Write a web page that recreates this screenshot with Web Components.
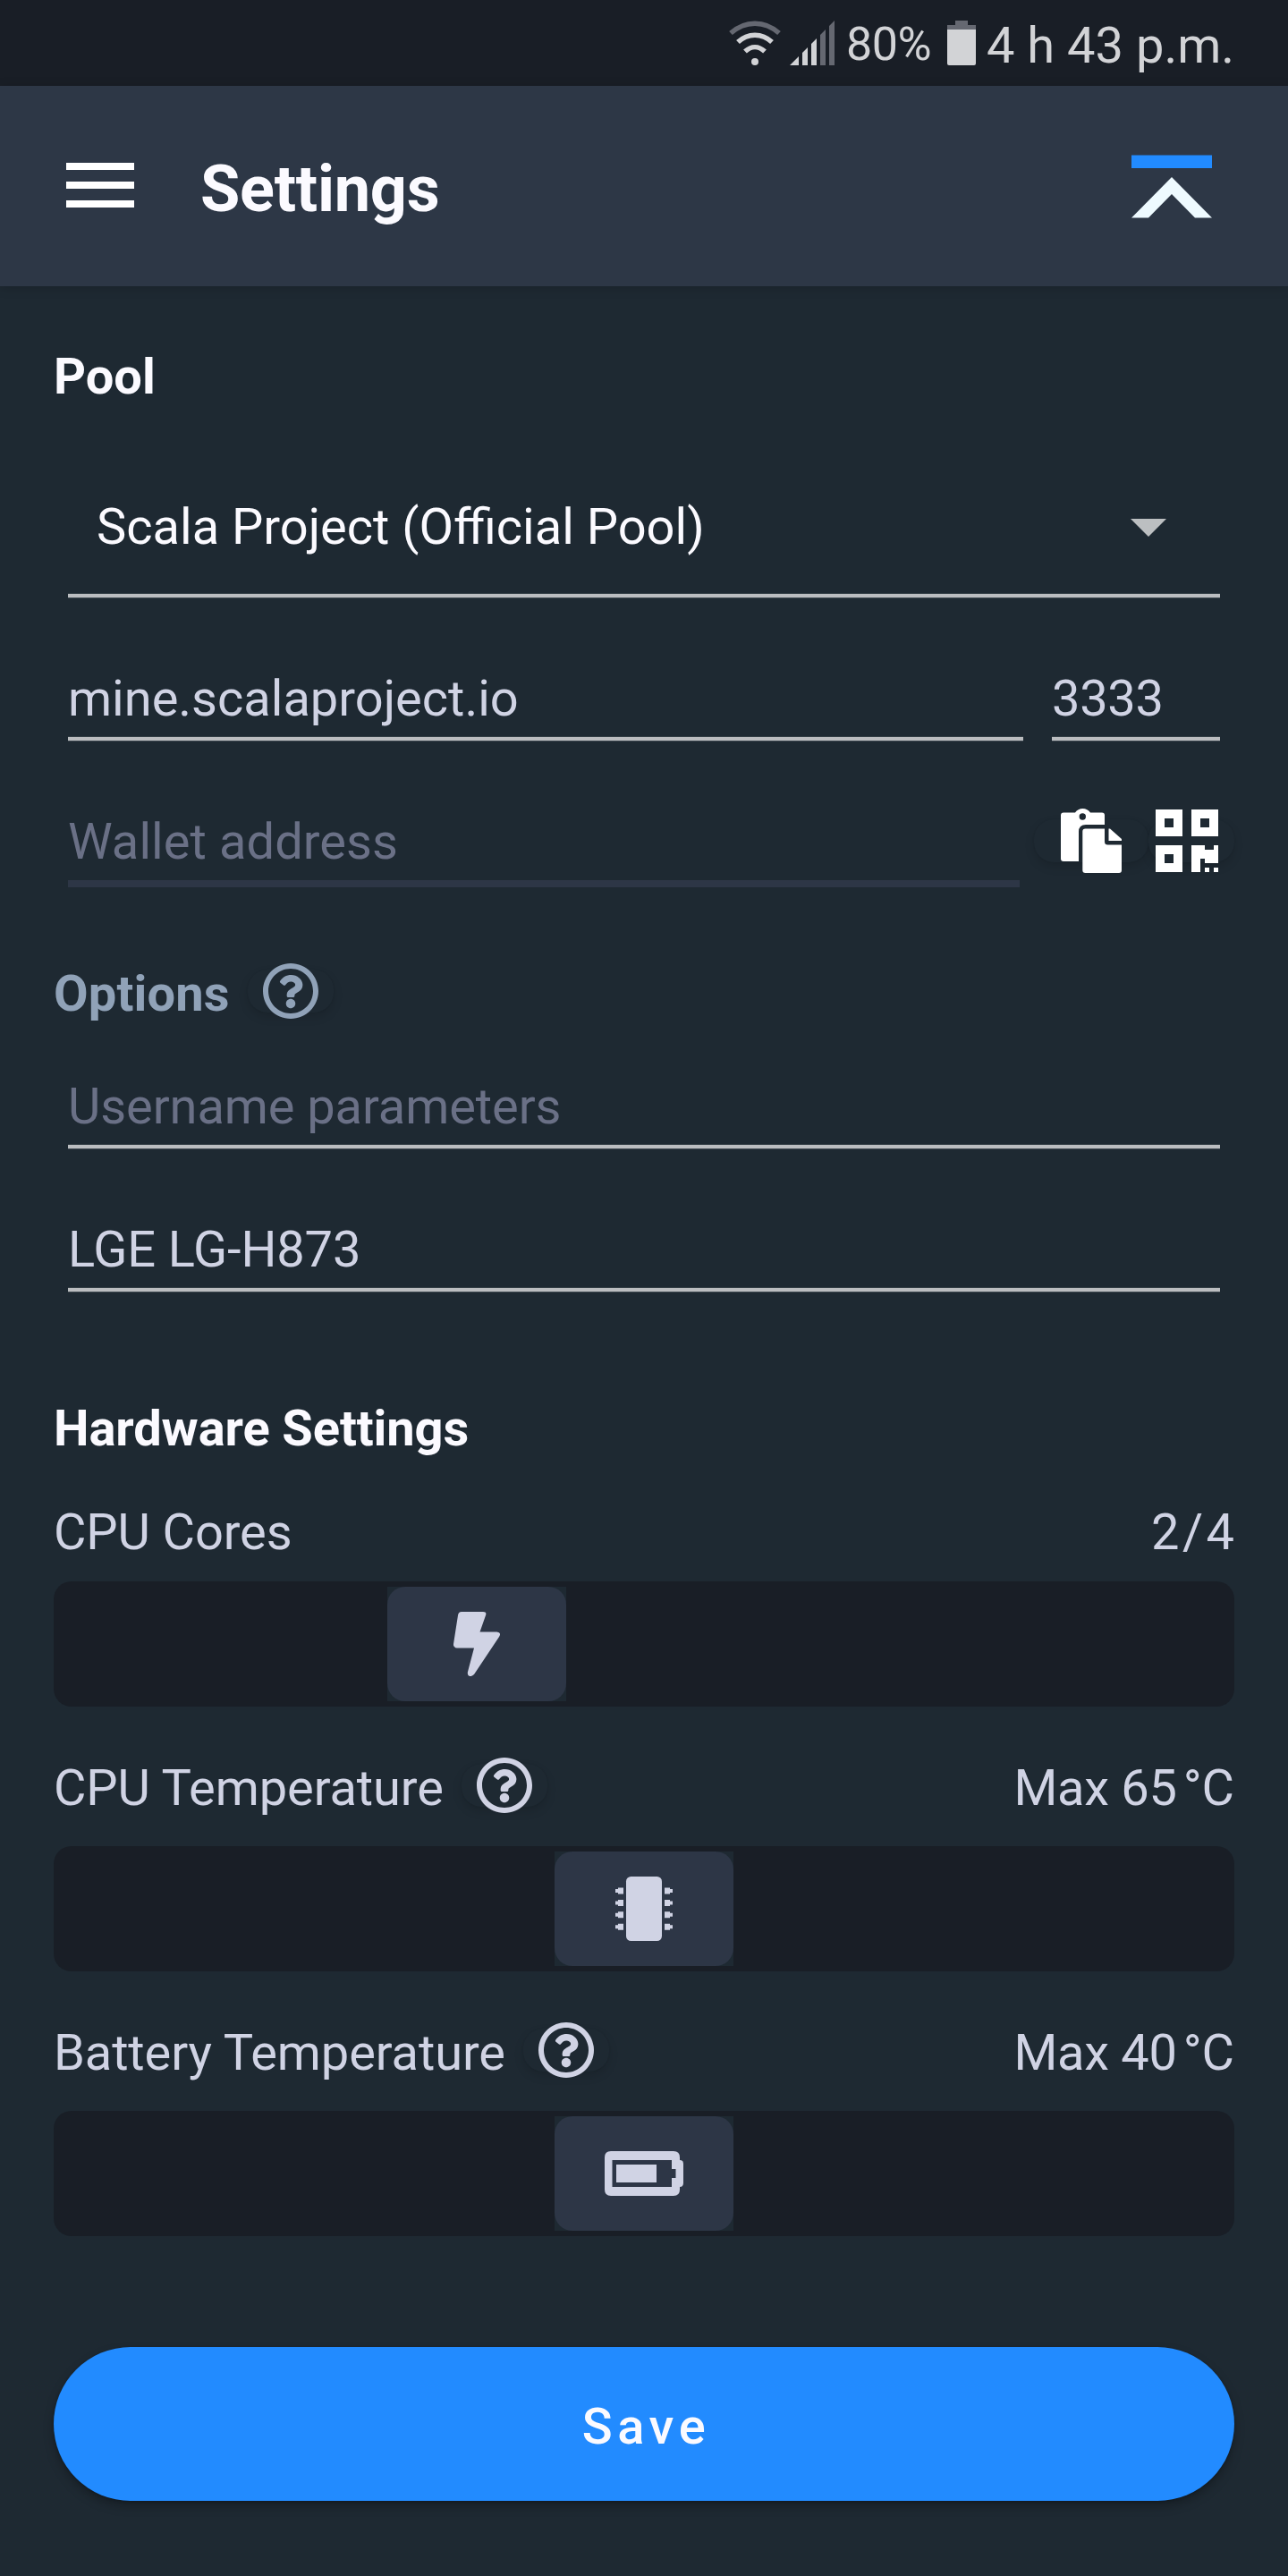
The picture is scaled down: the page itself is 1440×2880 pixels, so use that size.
<!DOCTYPE html>
<html lang="en">
<head>
<meta charset="utf-8">
<title>Settings</title>
<style>
  html, body { margin: 0; padding: 0; background: #1e2932; }
  body { width: 1440px; height: 2880px; overflow: hidden; font-family: Roboto, "Liberation Sans", sans-serif; }
</style>
</head>
<body>
<settings-screen></settings-screen>
<script>
const define = (name, html) => {
  const tpl = document.createElement('template');
  tpl.innerHTML = html;
  customElements.define(name, class extends HTMLElement {
    constructor() {
      super();
      this.attachShadow({ mode: 'open' }).append(tpl.content.cloneNode(true));
    }
  });
};

define('status-bar', `
<style>
  :host { display: flex; height: 96px; background: #191e26; color: #d2d3d6; box-sizing: border-box; padding: 0 62px 0 815px; }
  svg { display: block; flex: none; }
  span { white-space: pre; line-height: 64px; flex: none; }
  .pct { font-size: 52px; margin: 18px 0 0 11px; letter-spacing: -.5px; width: 96px; }
  .time { font-size: 56px; margin: 19px 0 0 12px; }
  .bat { margin-left: 17px; }
</style>
<svg width="120" height="96" viewBox="815 0 120 96">
  <path d="M817 37C833 22.500 855 22.500 871 37" fill="none" stroke="#656871" stroke-width="5.500"/>
  <path d="M825 47C836 36.500 852 36.500 863 47M833 57.500C840 51 848 51 855 57.500" fill="none" stroke="#d2d3d6" stroke-width="5.500"/>
  <g fill="#d2d3d6"><circle cx="844" cy="69" r="4"/><path d="M883 73l10-10v10zM897 73V59l6-6v20zM907 73V49l6-6v30z"/></g>
  <path fill="#656871" d="M917 73V39l6-6v40zM927 73V29l6-6v50z"/>
</svg>
<span class="pct">80%</span>
<svg class="bat" width="32" height="96" viewBox="1059 0 32 96">
  <path fill="#656871" d="M1068 23h14v5h9v6h-32v-6h9z"/>
  <path fill="#d2d3d6" d="M1059 33h32v38q0 2-2 2h-28q-2 0-2-2z"/>
</svg>
<span class="time">4 h 43 p.m.</span>`);

define('app-header', `
<style>
  :host { display: flex; height: 224px; box-sizing: border-box; background: #2d3746; align-items: flex-start; padding: 0 85px 0 74px; box-shadow: 0 2px 12px rgba(0,0,0,.16); position: relative; }
  svg { display: block; flex: none; }
  h1 { margin: 74px 0 0; font-size: 72px; line-height: 84px; font-weight: 700; color: #fbfaff; flex: 1; padding-left: 74px; letter-spacing: -.25px; }
</style>
<svg style="margin-top:86px" width="76" height="50" viewBox="0 0 76 50" fill="#fff"><path d="M0 0h76v8H0zM0 21h76v8H0zM0 42h76v8H0z"/></svg>
<h1><slot></slot></h1>
<svg style="margin-top:77px" width="90" height="71" viewBox="0 0 90 71"><path fill="#228bff" d="M0 .5h90V15H0z"/><path fill="#eefaff" d="M45 25l45 45.500H71L45 44 19 70.500H0z"/></svg>`);

define('section-title', `
<style>
  :host { display: flex; align-items: flex-start; height: 64px; font-size: 56px; line-height: 64px; font-weight: 700; color: #fbfaff; white-space: nowrap; }
</style><slot></slot>`);

define('text-field', `
<style>
  :host { display: block; box-sizing: border-box; font-size: 56px; line-height: 64px; color: #d0d3e4; white-space: nowrap; }
  .value { display: flex; justify-content: space-between; padding-bottom: 11px; }
  .line { height: 4px; background: #bbbdc0; box-shadow: 0 1px rgba(187,189,192,.2), 0 -1px rgba(187,189,192,.14); }
  :host([placeholder]) { color: #6a7086; }
  :host([thick]) .line { height: 8px; background: #2d3646; box-shadow: none; }
  :host([select]) { color: #fbfaff; }
  :host([select]) .value { padding: 0 60px 43px 32px; }
  svg { display: none; margin-top: 23px; }
  :host([select]) svg { display: block; }
</style>
<div class="value"><slot></slot><svg width="40" height="20" viewBox="0 0 40 20"><path fill="#bcbfc1" d="M0 0h40L20 20z"/></svg></div>
<div class="line"></div>`);

define('icon-button', `
<style>
  :host { display: flex; flex: none; width: 96px; height: 48px; border-radius: 22px; align-items: center; justify-content: center; background: #1e2932; box-shadow: 0 5px 11px rgba(0,0,0,.13), 0 0 2px rgba(0,0,0,.08); color: #d0d3e4; }
  ::slotted(svg) { display: block; flex: none; }
</style><slot></slot>`);

define('help-button', `
<style>
  :host { display: block; flex: none; margin-top: 5px; }
  icon-button { color: inherit; }
</style>
<icon-button><svg width="64" height="64" viewBox="0 0 512 512" fill="currentColor"><path d="M256 8C119.043 8 8 119.083 8 256c0 136.997 111.043 248 248 248s248-111.003 248-248C504 119.083 392.957 8 256 8zm0 448c-110.532 0-200-89.431-200-200 0-110.495 89.472-200 200-200 110.491 0 200 89.471 200 200 0 110.530-89.431 200-200 200zm107.244-255.200c0 67.052-72.421 68.084-72.421 92.863V300c0 6.627-5.373 12-12 12h-45.647c-6.627 0-12-5.373-12-12v-8.659c0-35.745 27.100-50.034 47.579-61.516 17.561-9.845 28.324-16.541 28.324-29.579 0-17.246-21.999-28.693-39.784-28.693-23.189 0-33.894 10.977-48.942 29.969-4.057 5.120-11.460 6.071-16.666 2.124l-27.824-21.098c-5.107-3.872-6.251-11.066-2.644-16.363C184.846 131.491 214.940 112 261.794 112c49.071 0 101.450 38.304 101.450 88.800zM298 368c0 23.159-18.841 42-42 42s-42-18.841-42-42 18.841-42 42-42 42 18.841 42 42z"/></svg></icon-button>`);

define('slider-row', `
<style>
  :host { display: flex; flex-direction: column; font-size: 56px; line-height: 64px; color: #d0d3e4; white-space: nowrap; }
  .head { display: flex; height: 64px; align-items: flex-start; justify-content: space-between; margin-bottom: var(--gap, 33px); }
  .label { display: flex; align-items: flex-start; letter-spacing: -.1px; }
  .track { display: flex; height: 140px; box-sizing: border-box; padding: 6px 0 6px var(--at, 560px); border-radius: 20px; background: #191e26; }
  .knob { background: #1e2932; width: 200px; height: 128px; }
  .face { height: 100%; border-radius: 20px; background: #2d3646; display: flex; align-items: center; justify-content: center; }
</style>
<div class="head"><div class="label"><slot name="label"></slot></div><div><slot name="value"></slot></div></div>
<div class="track"><div class="knob"><div class="face"><slot name="icon"></slot></div></div></div>`);

define('save-button', `
<style>
  :host { display: flex; height: 172px; border-radius: 86px; background: #228bff; color: #fbfaff; justify-content: center; font-size: 56px; line-height: 64px; font-weight: 500; letter-spacing: 5.600px; box-shadow: 0 6px 12px rgba(0,0,0,.26), 0 1px 3px rgba(0,0,0,.2); box-sizing: border-box; padding: 57px 0 0 5px; }
</style><slot></slot>`);

define('settings-screen', `
<style>
  :host { display: flex; flex-direction: column; width: 1440px; height: 2880px; background: #1e2932; }
  main { display: flex; flex-direction: column; padding: 69px 60px 0; }
  .fields { display: flex; flex-direction: column; gap: 81px; padding: 0 16px; }
  .row { display: flex; }
  svg { display: block; }
  .max { letter-spacing: -.3px; }
  .thin { display: inline-block; width: 7px; }
</style>
<status-bar></status-bar>
<app-header>Settings</app-header>
<main>
  <section-title>Pool</section-title>
  <div class="fields" style="margin-top:104px">
    <text-field select>Scala Project (Official Pool)</text-field>
    <div class="row" style="gap:32px">
      <text-field style="flex:1">mine.scalaproject.io</text-field>
      <text-field style="width:188px;letter-spacing:-.3px">3333</text-field>
    </div>
    <div class="row" style="margin-right:-16px;align-items:flex-start">
      <text-field placeholder thick style="flex:1;margin-right:16px;letter-spacing:.08px">Wallet address</text-field>
      <icon-button style="width:128px;margin-top:7px">
        <svg width="68" height="72" viewBox="0 0 68 72" fill="#fff">
          <path fill-rule="evenodd" d="M3 4.500H16C18 1.500 21 0 24.500 0S31 1.500 33 4.500H46Q49 4.500 49 7.500V18H28Q20 18 20 26V59H3Q0 59 0 56V7.500Q0 4.500 3 4.500zM24.300 5.300a3.700 3.700 0 1 0 0 7.400 3.700 3.700 0 0 0 0-7.400z"/>
          <path d="M27.500 22.500H49V37Q49 40.500 52.500 40.500H68V69Q68 72 65 72H27.500Q24.300 72 24.300 69V25.500Q24.300 22.500 27.500 22.500zM53.500 22.500H55L68 34V36H53.500z"/>
        </svg>
      </icon-button>
      <icon-button style="margin-top:7px;box-sizing:border-box;padding-right:10px">
        <svg width="70" height="70" viewBox="0 0 14 14" fill="#fff"><path fill-rule="evenodd" d="M0 0h6v6H0zM2 2v2h2V2zM8 0h6v6H8zM10 2v2h2V2zM0 8h6v6H0zM2 10v2h2v-2zM8 8h3v1h2V8h1v4h-3v-1h-1v3H8zM11 13h1v1h-1zM13 13h1v1h-1z"/></svg>
      </icon-button>
    </div>
  </div>
  <section-title style="margin-top:87px;color:#90a2b8;letter-spacing:.15px">Options<help-button style="margin-left:20px"></help-button></section-title>
  <div class="fields" style="margin-top:62px">
    <text-field placeholder style="letter-spacing:-.08px">Username parameters</text-field>
    <text-field style="letter-spacing:-.12px">LGE LG-H873</text-field>
  </div>
  <section-title style="margin-top:121px;letter-spacing:-.1px">Hardware Settings</section-title>
  <slider-row style="margin-top:52px;--gap:23px;--at:373px">
    <span slot="label">CPU Cores</span>
    <span slot="value">2<span style="margin:0 3.500px">/</span>4</span>
    <svg slot="icon" width="52" height="72" viewBox="0 0 52 72" fill="#d0d3e4"><path d="M9 0H33Q37.500 0 36 4L29.500 22.500H48.500Q54 23 51 28L23 70Q20.500 72.500 18 72 15 71 16 67L23 40.500H4Q-.5 40 0 36L5 4Q5.500 0 9 0z"/></svg>
  </slider-row>
  <slider-row style="margin-top:59px">
    <span slot="label">CPU Temperature</span><help-button slot="label" style="margin-left:20px"></help-button>
    <span slot="value"><span class="max">Max 65</span><span class="thin"></span>°C</span>
    <svg slot="icon" width="64" height="72" viewBox="0 0 64 72" fill="#d0d3e4">
      <rect x="12" width="40" height="72" rx="5.500"/>
      <path d="M9 12.500v7H3V18H0v-4h3v-1.500zM9 26v7H3v-1.500H0v-4h3V26zM9 39.300v7H3v-1.500H0v-4h3v-1.500zM9 52.800v7H3v-1.500H0v-4h3v-1.500zM55 12.500v7h6V18h3v-4h-3v-1.500zM55 26v7h6v-1.500h3v-4h-3V26zM55 39.300v7h6v-1.500h3v-4h-3v-1.500zM55 52.800v7h6v-1.500h3v-4h-3v-1.500z"/>
    </svg>
  </slider-row>
  <slider-row style="margin-top:59px">
    <span slot="label">Battery Temperature</span><help-button slot="label" style="margin-left:20px"></help-button>
    <span slot="value"><span class="max">Max 40</span><span class="thin"></span>°C</span>
    <svg slot="icon" width="88" height="50" viewBox="0 0 88 50" fill="#d0d3e4">
      <path fill-rule="evenodd" d="M7 0H77Q84 0 84 7V10Q88 10 88 14V36Q88 40 84 40V43Q84 50 77 50H7Q0 50 0 43V7Q0 0 7 0zM8.500 10V40H75V30H79.500V20H75V10zM13 15H58V35H13z"/>
    </svg>
  </slider-row>
  <save-button style="margin-top:124px">Save</save-button>
</main>`);
</script>
</body>
</html>
